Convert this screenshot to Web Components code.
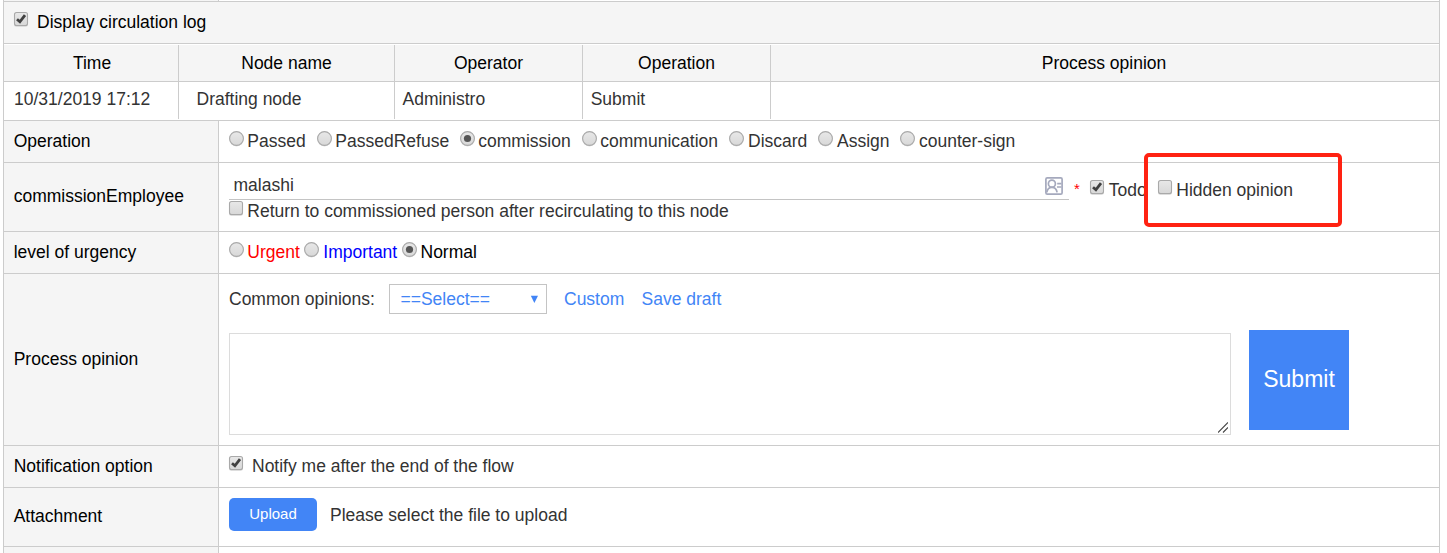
<!DOCTYPE html>
<html lang="en">
<head>
<meta charset="utf-8">
<title>Process form</title>
<style>
html,body{margin:0;background:#fff}
body{height:553px;overflow:hidden;font:17.5px/20px "Liberation Sans",Arial,sans-serif;color:#333}
</style>
</head>
<body>
<process-form></process-form>
<script>
function define(name, html){
  const t=document.createElement('template');
  t.innerHTML=html;
  customElements.define(name, class extends HTMLElement{
    constructor(){
      super();
      this.attachShadow({mode:'open'}).appendChild(t.content.cloneNode(true));
    }
  });
}

/* Checkbox or radio followed by its caption */
define('choice-item', `
<style>
:host{display:flex;flex:none;width:var(--w,auto);height:20px;white-space:nowrap}
svg{display:none;flex:none;width:16px;height:17px;overflow:visible}
:host([kind=radio]) .radio,:host([kind=check]) .check{display:block}
.on{display:none}
:host([checked]) .on{display:block}
.cap{margin-left:var(--gap,2.3px)}
</style>
<svg class="radio" viewBox="0 0 16 17">
  <defs><linearGradient id="r" x1="0" y1="0" x2="0" y2="1"><stop offset="0" stop-color="#e8e8e8"/><stop offset="1" stop-color="#d8d8d8"/></linearGradient></defs>
  <circle cx="7.5" cy="8.2" r="7.3" fill="#ddd"/>
  <circle cx="7.5" cy="7.5" r="6.9" fill="url(#r)" stroke="#a9a9a9" stroke-width="1.1"/>
  <circle class="on" cx="7.5" cy="7.5" r="3.6" fill="#555"/>
</svg>
<svg class="check" viewBox="0 0 16 17">
  <defs><linearGradient id="c" x1="0" y1="0" x2="0" y2="1"><stop offset="0" stop-color="#e8e8e8"/><stop offset="1" stop-color="#d8d8d8"/></linearGradient></defs>
  <rect x="0" y="1" width="14" height="14" rx="2.4" fill="#ddd"/>
  <rect x=".5" y=".5" width="13" height="13" rx="2" fill="url(#c)" stroke="#a9a9a9" stroke-width="1.1"/>
  <path class="on" d="M3 7.3 5.9 9.8 11 3.2" fill="none" stroke="#404040" stroke-width="2.8"/>
</svg>
<span class="cap"><slot></slot></span>`);

/* Label column and value column */
define('form-row', `
<style>
:host{display:grid;grid-template-columns:214px 1px 1fr;height:var(--h);border-bottom:1px solid #ccc}
.label{background:#f5f5f5;color:#000;padding:var(--lt,10px) 0 0 9.7px;white-space:nowrap}
.line{background:#ccc}
.value{padding:var(--vt,10px) 0 0 10px;min-width:0}
</style>
<div class="label"><slot name="label"></slot></div><div class="line"></div><div class="value"><slot></slot></div>`);

/* Circulation log table */
define('log-table', `
<style>
:host{display:block}
.row{display:grid;grid-template-columns:175px 216px 188px 188px 668px;white-space:nowrap}
.head{height:36px;padding-top:1px;border-bottom:1px solid #ccc;color:#000;text-align:center}
.head div{background:#f5f5f5;padding-top:8px;border-right:1px solid #ccc}
.head div:first-child{padding-left:2px}
.head div:last-child{padding-right:2px}
.data{height:38px;border-bottom:1px solid #ccc}
.data div{height:30px;padding-top:7px;border-right:1px solid #ccc}
.row div:last-child{border-right:0}
</style>
<div class="row head"><div>Time</div><div>Node name</div><div>Operator</div><div>Operation</div><div>Process opinion</div></div>
<div class="row data"><div style="padding-left:10px">10/31/2019 17:12</div><div style="padding-left:17.5px">Drafting node</div><div style="padding-left:7.5px">Administro</div><div style="padding-left:7.7px">Submit</div><div></div></div>`);

/* Underlined person picker */
define('person-field', `
<style>
:host{display:flex;justify-content:space-between;width:840px;height:24px;border-bottom:1px solid #c4c4c4;box-sizing:content-box}
span{padding-left:4.5px}
svg{width:18px;height:18px;margin:2px 6px 0 0}
</style>
<span>malashi</span>
<svg viewBox="0 0 18 18" fill="none" stroke="#a5a9bd" stroke-width="1.7"><rect x=".9" y=".9" width="16.2" height="16.2" rx="1.4"/><circle cx="6.9" cy="6.7" r="3.5"/><path d="M1.8 15.4c.5-3.2 2.2-5 5.1-5s4.7 1.8 5.2 5M12.2 6.6h4.2M12 10h4.4"/></svg>`);

define('select-box', `
<style>
:host{display:flex;justify-content:space-between;box-sizing:border-box;width:158px;height:30px;border:1px solid #c4c4c4;padding:4px 8px 0 10.5px;color:#4285f6}
svg{width:8px;height:8px;margin-top:6px}
</style>
<span><slot></slot></span><svg viewBox="0 0 8 8"><path d="M.8 .8h7.2L4.4 8Z" fill="#4285f6"/></svg>`);

define('opinion-area', `
<style>
:host{display:flex;align-items:flex-end;justify-content:flex-end;box-sizing:border-box;width:1002px;height:102px;border:1px solid #dcdcdc;flex:none}
svg{width:10px;height:11px;margin:0 2px 1px 0}
</style>
<svg viewBox="0 0 10 11" stroke="#444" stroke-width="1.1"><path d="M0 10.5 10 .5M5 10.5 10 5.5"/></svg>`);

define('action-button', `
<style>
:host{display:flex;align-items:center;justify-content:center;flex:none;box-sizing:border-box;background:#4285f6;color:#fff}
:host([size=big]){width:100px;height:100px;font-size:23px;line-height:26px;padding-bottom:2px}
:host([size=small]){width:88px;height:33px;border-radius:5px;font-size:15px;padding-bottom:1px}
</style><slot></slot>`);

define('callout-frame', `
<style>
:host{position:absolute;left:1140px;top:152.6px;width:198px;height:74px;box-sizing:border-box;border:4px solid #ff2212;border-radius:5px;pointer-events:none}
</style>`);

define('process-form', `
<style>
:host{display:block;position:relative;width:1435px;margin-left:3px;border:solid #ccc;border-width:0 1px}
.toggle{display:flex;height:31px;padding:10px 0 0 10px;background:#f5f5f5;color:#000;border-bottom:1px solid #ccc}
.flex{display:flex}
.asterisk{font-size:15px;color:#f00;width:6px;margin:4px 0 0 5px}
.links{color:#4285f6}
</style>
<form-row style="--h:1px;--lt:0;--vt:0"></form-row>
<div class="toggle"><choice-item kind="check" checked style="--gap:7px">Display circulation log</choice-item></div>
<log-table></log-table>
<form-row style="--h:41px"><span slot="label">Operation</span>
  <div class="flex">
    <choice-item kind="radio" style="--w:88px">Passed</choice-item>
    <choice-item kind="radio" style="--w:143px">PassedRefuse</choice-item>
    <choice-item kind="radio" checked style="--w:122px">commission</choice-item>
    <choice-item kind="radio" style="--w:147px">communication</choice-item>
    <choice-item kind="radio" style="--w:89px;--gap:3px">Discard</choice-item>
    <choice-item kind="radio" style="--w:82px;--gap:3px">Assign</choice-item>
    <choice-item kind="radio" style="--gap:3px">counter-sign</choice-item>
  </div>
</form-row>
<form-row style="--h:68px;--lt:23px;--vt:12px"><span slot="label">commissionEmployee</span>
  <div class="flex"><person-field></person-field><span class="asterisk">*</span>
    <choice-item kind="check" checked style="--w:68px;--gap:2.7px;margin:5px 0 0 10px">Todo</choice-item>
    <choice-item kind="check" style="--gap:2.3px;margin-top:5px">Hidden opinion</choice-item></div>
  <choice-item kind="check" style="--gap:2.3px;margin-top:1px">Return to commissioned person after recirculating to this node</choice-item>
</form-row>
<form-row style="--h:41px"><span slot="label">level of urgency</span>
  <div class="flex">
    <choice-item kind="radio" style="--w:75px;color:#f00">Urgent</choice-item>
    <choice-item kind="radio" style="--w:98px;--gap:3.3px;color:#00f">Important</choice-item>
    <choice-item kind="radio" checked style="color:#000;--gap:2.5px">Normal</choice-item>
  </div>
</form-row>
<form-row style="--h:171px;--lt:75px;--vt:10px"><span slot="label">Process opinion</span>
  <div class="flex" style="height:46px"><span style="width:160px;padding-top:5px">Common opinions:</span><select-box>==Select==</select-box>
    <span class="links" style="margin:5px 0 0 17px;width:77.5px">Custom</span><span class="links" style="margin-top:5px">Save draft</span></div>
  <div class="flex" style="gap:18px"><opinion-area style="margin-top:3px"></opinion-area><action-button size="big">Submit</action-button></div>
</form-row>
<form-row style="--h:41px"><span slot="label">Notification option</span>
  <choice-item kind="check" checked style="--gap:7px">Notify me after the end of the flow</choice-item>
</form-row>
<form-row style="--h:58px;--lt:18px;--vt:10px"><span slot="label">Attachment</span>
  <div class="flex"><action-button size="small">Upload</action-button><span style="margin:7px 0 0 13px">Please select the file to upload</span></div>
</form-row>
<form-row style="--h:6px;--lt:0;--vt:0;border:0"></form-row>
<callout-frame></callout-frame>`);
</script>
</body>
</html>
